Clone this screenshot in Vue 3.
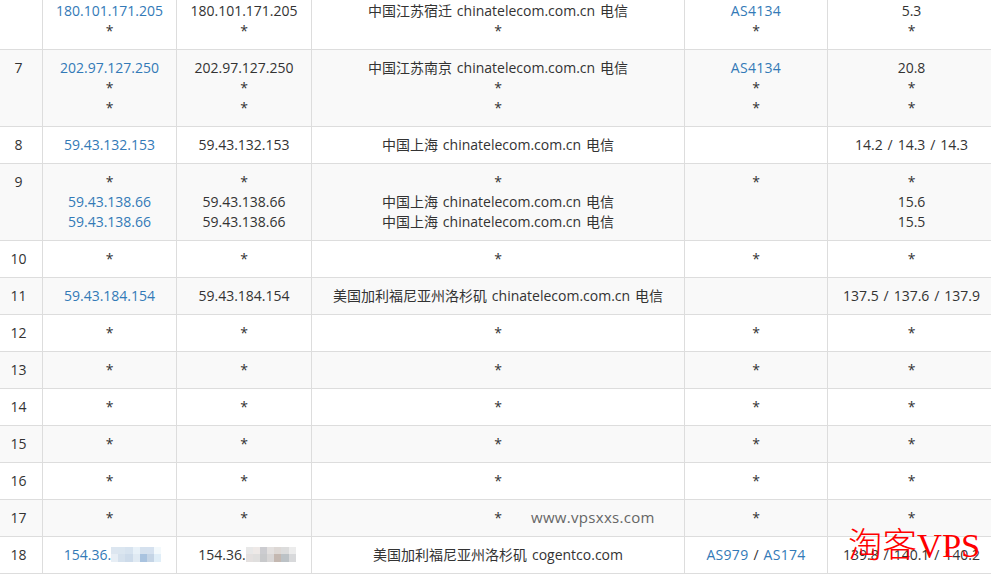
<script setup>
const stars = [12, 13, 14, 15, 16, 17]
const blurA = ['#dce6f0','#dbe6f0','#d7e3ef','#e8f1f8','#d5e1ee','#d5e1ef','#f3f9fc','#e7eef5','#d5e1ed','#cddbea','#e0eaf3','#a9c3df','#c5d5e6','#e0eef8']
const blurB = ['#e8e8e8','#eee9e7','#ccccd0','#e3e0df','#ddd8d5','#dcdcdc','#ececec','#e4e0df','#e0dfde','#c8c9cb','#d8d6d6','#c4b8b1','#bcc2c6','#d8d9db']
</script>

<template>
  <div class="page">
    <table class="trace">
      <colgroup>
        <col class="c-hop" /><col class="c-ip" /><col class="c-ip2" /><col class="c-geo" /><col class="c-as" /><col class="c-ms" />
      </colgroup>
      <tbody>
        <tr class="first">
          <td></td>
          <td><a>180.101.171.205</a><br />*</td>
          <td>180.101.171.205<br />*</td>
          <td>中国江苏宿迁 chinatelecom.com.cn 电信<br />*</td>
          <td><a class="asn">AS4134</a><br />*</td>
          <td>5.3<br />*</td>
        </tr>
        <tr>
          <td>7</td>
          <td><a>202.97.127.250</a><br />*<br />*</td>
          <td>202.97.127.250<br />*<br />*</td>
          <td>中国江苏南京 chinatelecom.com.cn 电信<br />*<br />*</td>
          <td><a class="asn">AS4134</a><br />*<br />*</td>
          <td>20.8<br />*<br />*</td>
        </tr>
        <tr>
          <td>8</td>
          <td><a>59.43.132.153</a></td>
          <td>59.43.132.153</td>
          <td>中国上海 chinatelecom.com.cn 电信</td>
          <td></td>
          <td>14.2 / 14.3 / 14.3</td>
        </tr>
        <tr>
          <td>9</td>
          <td>*<br /><a>59.43.138.66</a><br /><a>59.43.138.66</a></td>
          <td>*<br />59.43.138.66<br />59.43.138.66</td>
          <td>*<br />中国上海 chinatelecom.com.cn 电信<br />中国上海 chinatelecom.com.cn 电信</td>
          <td>*</td>
          <td>*<br />15.6<br />15.5</td>
        </tr>
        <tr>
          <td>10</td><td>*</td><td>*</td><td>*</td><td>*</td><td>*</td>
        </tr>
        <tr>
          <td>11</td>
          <td><a>59.43.184.154</a></td>
          <td>59.43.184.154</td>
          <td>美国加利福尼亚州洛杉矶 chinatelecom.com.cn 电信</td>
          <td></td>
          <td>137.5 / 137.6 / 137.9</td>
        </tr>
        <tr v-for="n in stars" :key="n">
          <td>{{ n }}</td><td>*</td><td>*</td><td>*</td><td>*</td><td>*</td>
        </tr>
        <tr>
          <td>18</td>
          <td><a>154.36.</a><span class="mosaic"><i v-for="c in blurA" :key="c" :style="{ background: c }"></i></span></td>
          <td>154.36.<span class="mosaic"><i v-for="c in blurB" :key="c" :style="{ background: c }"></i></span></td>
          <td>美国加利福尼亚州洛杉矶 cogentco.com</td>
          <td><a class="asn">AS979</a> / <a class="asn">AS174</a></td>
          <td>139.8 / 140.1 / 140.2</td>
        </tr>
      </tbody>
    </table>
    <span class="mark-site">www.vpsxxs.com</span>
    <span class="mark-brand">淘客VPS</span>
  </div>
</template>

<style scoped>
.page {
  position: relative;
  width: 991px;
  height: 577px;
  overflow: hidden;
  background: #fff;
  font-family: "Open Sans", "Noto Sans CJK SC", sans-serif;
  font-size: 14px;
  line-height: 20px;
  word-spacing: 1.3px;
  color: #333;
}
.trace {
  margin-left: -6px;
  width: 1001px;
  table-layout: fixed;
  border-collapse: collapse;
}
.c-hop { width: 48px; }
.c-ip { width: 134px; }
.c-ip2 { width: 135px; }
.c-geo { width: 373px; }
.c-as { width: 143px; }
.c-ms { width: 168px; }
td {
  padding: 8px;
  border: 1px solid #ddd;
  text-align: center;
  vertical-align: top;
  white-space: nowrap;
}
tr:nth-child(even) td { background: #f9f9f9; }
.first td { padding-top: 1px; border-top: 0; }
a { color: #337ab7; }
.asn { letter-spacing: 0.3px; }
.mosaic {
  display: inline-grid;
  grid-template-columns: repeat(7, 1fr);
  grid-template-rows: 7px 8px;
  width: 50px;
  height: 15px;
  margin: 2px -6px 0 0;
  vertical-align: top;
}
.mark-site {
  position: absolute;
  left: 531px;
  top: 507px;
  font-size: 15px;
  letter-spacing: 0.3px;
  color: #666;
}
.mark-brand {
  position: absolute;
  left: 848px;
  top: 525px;
  font-family: "Liberation Serif", "Noto Sans CJK SC", serif;
  font-size: 34.5px;
  font-weight: 300;
  line-height: 40px;
  word-spacing: 0;
  color: #f00;
}
</style>

<style>
html, body { margin: 0; background: #fff; }
</style>
